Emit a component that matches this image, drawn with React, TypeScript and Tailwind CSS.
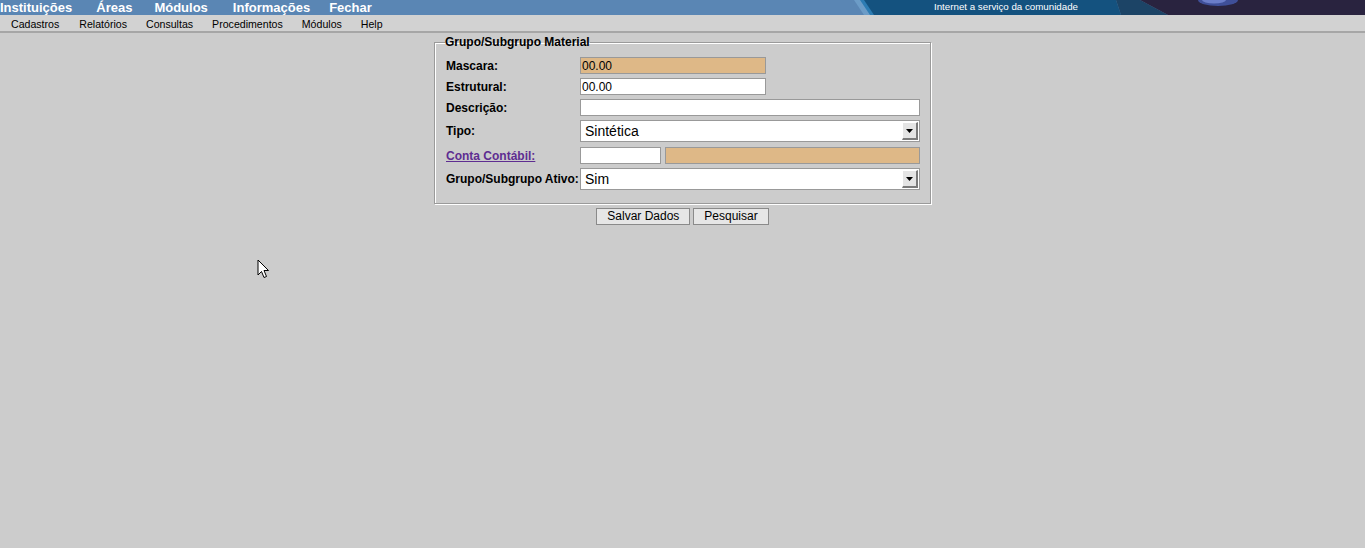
import React from 'react';

// menu principal (barra azul)
const topMenu = ['Instituições', 'Áreas', 'Módulos', 'Informações', 'Fechar'];
const topGap = ['', 'ml-[24px]', 'ml-[22px]', 'ml-[25px]', 'ml-[19px]'];

// sub menu (barra cinza)
const subMenu = ['Cadastros', 'Relatórios', 'Consultas', 'Procedimentos', 'Módulos', 'Help'];

const font = "font-['Liberation_Sans',Arial,sans-serif]";

// faixa do topo com o slogan
const Banner: React.FC = () => (
  <svg width="525" height="15" viewBox="0 0 525 15" className="block shrink-0">
    <polygon points="14,0 24,0 34,15 24,15" fill="#6c9cc7" />
    <polygon points="20,0 25,0 35,15 30,15" fill="#2d7cb3" />
    <polygon points="24,0 276,0 281,15 34,15" fill="#14527f" />
    <polygon points="276,0 300,0 328,15 281,15" fill="#1c4466" />
    <polygon points="300,0 525,0 525,15 328,15" fill="#29233f" />
    <ellipse cx="378" cy="0" rx="20" ry="6" fill="#3f4f98" />
    <ellipse cx="374" cy="0" rx="12" ry="3.5" fill="#6b7dc8" />
    <text
      x="94"
      y="10"
      fill="#ffffff"
      fontSize="9.5"
      fontFamily="'Liberation Sans', Arial, sans-serif"
      textLength="144"
      lengthAdjust="spacingAndGlyphs"
    >
      Internet a serviço da comunidade
    </text>
  </svg>
);

// campo texto simples
const Campo: React.FC<{ value?: string; w: string; bege?: boolean }> = ({ value = '', w, bege }) => (
  <input
    readOnly
    defaultValue={value}
    className={`${w} block h-[17px] border border-[#999] pl-[1px] text-[12px] leading-[15px] text-black outline-none ${font} ${
      bege ? 'bg-[#deb887]' : 'bg-white'
    }`}
  />
);

// combo imitando o select antigo
const Combo: React.FC<{ value: string }> = ({ value }) => (
  <div className="flex h-[22px] w-[340px] items-center border border-[#999] bg-white">
    <span className={`flex-1 pl-[4px] text-[14px] leading-[20px] text-black ${font}`}>{value}</span>
    <div className="mr-[1px] flex h-[18px] w-[16px] items-center justify-center border-t border-l border-t-white border-l-white border-r-2 border-b-2 border-r-[#7a7a7a] border-b-[#7a7a7a] bg-[#e4e4e4]">
      <svg width="7" height="4" viewBox="0 0 7 4">
        <polygon points="0,0 7,0 3.5,4" fill="#000" />
      </svg>
    </div>
  </div>
);

const Linha: React.FC<{ label: React.ReactNode; children: React.ReactNode; className?: string }> = ({
  label,
  children,
  className = '',
}) => (
  <div className={`flex items-center ${className}`}>
    <div className={`w-[135px] pl-[1px] text-[12px] font-bold leading-[14px] text-black ${font}`}>{label}</div>
    <div className="flex items-center gap-[4px]">{children}</div>
  </div>
);

export default function App() {
  return (
    <div className={`relative min-h-[548px] bg-[#cccccc] ${font}`}>
      {/* barra azul */}
      <div className="flex h-[15px] items-stretch justify-between bg-[#5a86b4]">
        <div className="flex items-center">
          {topMenu.map((m, i) => (
            <span key={m} className={`text-[13px] font-bold leading-[15px] text-white ${topGap[i]}`}>
              {m}
            </span>
          ))}
        </div>
        <Banner />
      </div>

      {/* sub menu */}
      <div className="flex h-[18px] items-center gap-[19px] border-b-2 border-[#a6a6a6] bg-[#d2d2d2] pt-[2px] pl-[11px]">
        {subMenu.map((m, i) => (
          <span key={m} className={`text-[10.6px] leading-[14px] text-black ${i === 0 ? 'mr-[1px]' : ''}`}>
            {m}
          </span>
        ))}
      </div>

      {/* formulario */}
      <fieldset className="mx-auto mt-[2px] w-[497px] border border-[#9a9a9a] px-[10px] pt-[8px] pb-[13px] shadow-[1px_1px_0_#ffffff,inset_1px_1px_0_#ffffff]">
        <legend className="px-0 text-[12px] font-bold leading-[14px] text-black">Grupo/Subgrupo Material</legend>
        <div className="flex flex-col gap-[4px]">
          <Linha className="h-[17px]" label="Mascara:">
            <Campo value="00.00" w="w-[186px]" bege />
          </Linha>
          <Linha className="h-[17px]" label="Estrutural:">
            <Campo value="00.00" w="w-[186px]" />
          </Linha>
          <Linha className="h-[17px]" label="Descrição:">
            <Campo w="w-[340px]" />
          </Linha>
          <Linha className="h-[22px]" label="Tipo:">
            <Combo value="Sintética" />
          </Linha>
          <Linha
            className="mt-[1px] h-[17px]"
            label={<span className="text-[#5e2d91] underline">Conta Contábil:</span>}
          >
            <Campo w="w-[81px]" />
            <Campo w="w-[255px]" bege />
          </Linha>
          <Linha className="h-[22px]" label="Grupo/Subgrupo Ativo:">
            <Combo value="Sim" />
          </Linha>
        </div>
      </fieldset>

      {/* botoes */}
      <div className="mt-[4px] flex justify-center gap-[3px]">
        <button className="h-[17px] border border-[#8a8a8a] bg-[#e6e6e6] px-[10px] text-[12px] leading-[15px] text-black">
          Salvar Dados
        </button>
        <button className="h-[17px] border border-[#8a8a8a] bg-[#e6e6e6] px-[10px] text-[12px] leading-[15px] text-black">
          Pesquisar
        </button>
      </div>

      {/* ponteiro do mouse */}
      <svg width="14" height="21" viewBox="0 0 14 21" className="absolute left-[257px] top-[259px]">
        <path d="M1 1 L1 16 L4.5 12.5 L7 18.5 L9.5 17.5 L7 11.5 L11.5 11.5 Z" fill="#fff" stroke="#000" strokeWidth="1" />
      </svg>
    </div>
  );
}
